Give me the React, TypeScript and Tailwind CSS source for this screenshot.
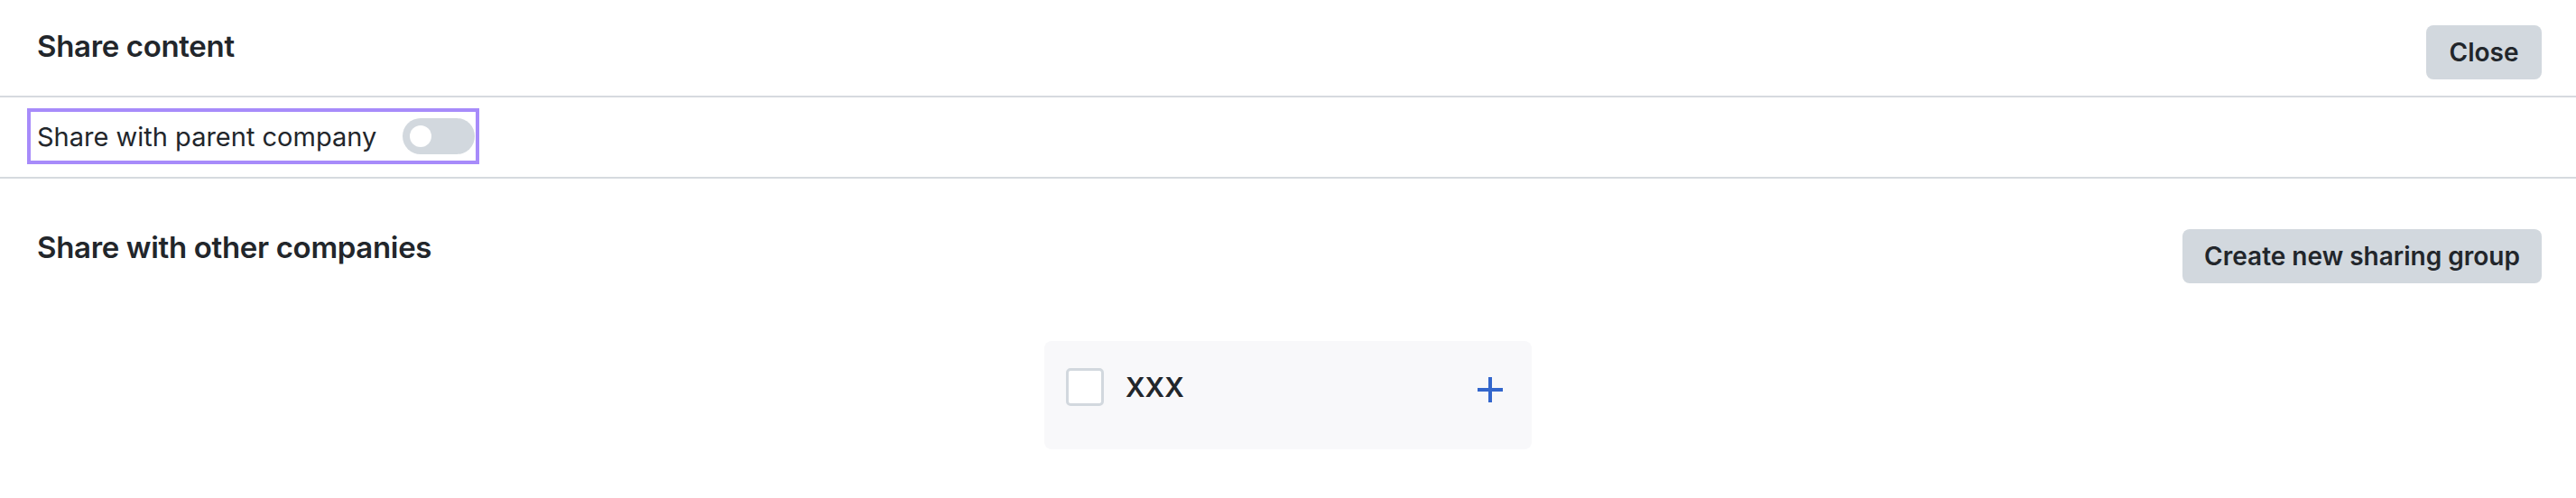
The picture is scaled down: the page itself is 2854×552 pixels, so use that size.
import React from 'react';

export default function App() {
  return (
    <div className="w-[2854px] h-[552px] bg-white text-[#22262b] font-['Inter',sans-serif] overflow-hidden">
      {/* Header */}
      <div className="h-[108px] flex justify-between items-start pl-[41px] pr-[38px] border-b-2 border-[#d6dadf]">
        <h1 className="mt-[31px] text-[33px] leading-[40px] font-semibold tracking-[-0.01em]">Share content</h1>
        <button className="mt-[28px] h-[60px] w-[128px] rounded-[8px] bg-[#d2d8de] text-[28px] font-semibold">
          Close
        </button>
      </div>

      {/* Parent company toggle */}
      <div className="h-[90px] pl-[30px] pt-[12px] border-b-2 border-[#d6dadf]">
        <div className="w-[501px] h-[62px] border-4 border-[#a78bfa] flex items-center justify-between pl-[7px] pr-[1px]">
          <span className="text-[29px] leading-none">Share with parent company</span>
          <div className="w-[80px] h-[40px] rounded-full bg-[#d2d8de] flex items-center pl-[8px]">
            <div className="w-[24px] h-[24px] rounded-full bg-white" />
          </div>
        </div>
      </div>

      {/* Other companies */}
      <div className="flex justify-between items-start pl-[41px] pr-[38px] pt-[56px]">
        <h2 className="text-[33px] leading-[40px] font-semibold tracking-[-0.01em]">Share with other companies</h2>
        <button className="h-[60px] w-[398px] rounded-[8px] bg-[#d2d8de] text-[28px] font-semibold">
          Create new sharing group
        </button>
      </div>

      <div className="flex justify-center pt-[64px]">
        <div className="w-[540px] h-[120px] rounded-[8px] bg-[#f8f8fa] pt-[30px] pl-[24px] pr-[32px]">
          <div className="flex items-center">
            <div className="w-[42px] h-[42px] rounded-[5px] border-[3px] border-[#d2d8de] bg-white" />
            <span className="ml-[24px] text-[30px] font-semibold leading-none">XXX</span>
            <svg className="ml-auto mt-[6px]" width="28" height="28" viewBox="0 0 28 28" fill="none">
              <path d="M14 0V28M0 14H28" stroke="#3366cc" strokeWidth="4" />
            </svg>
          </div>
        </div>
      </div>
    </div>
  );
}
